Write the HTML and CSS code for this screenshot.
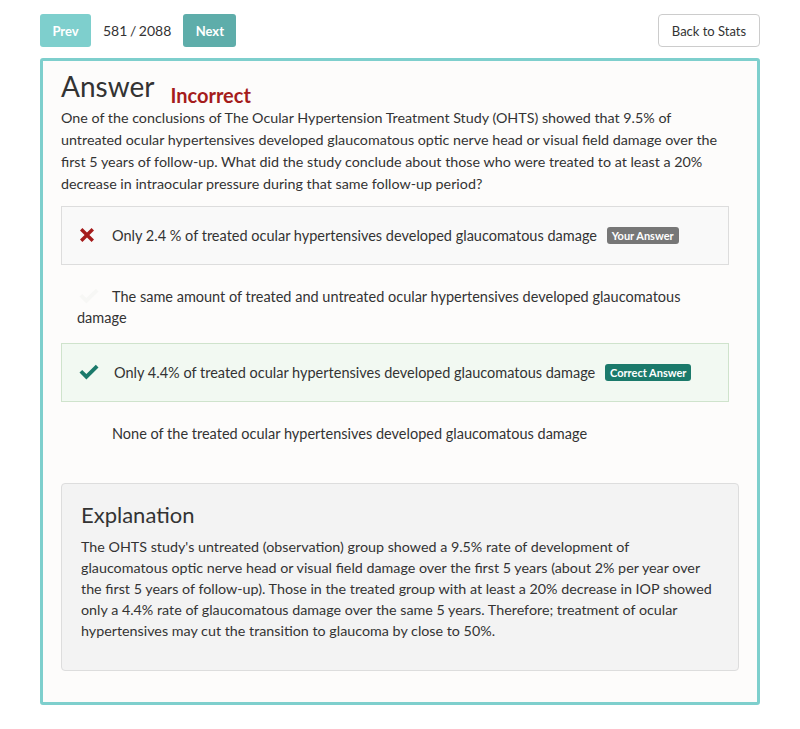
FILE: index.html
```html
<!DOCTYPE html>
<html>
<head>
<meta charset="utf-8">
<link rel="stylesheet" href="styles.css">
</head>
<body>
<div class="topbar">
  <div class="nav">
    <button class="btn btn-prev">Prev</button>
    <span class="counter">581 / 2088</span>
    <button class="btn btn-next">Next</button>
  </div>
  <button class="btn-back">Back to Stats</button>
</div>
<div class="panel">
  <div class="head">
    <h1 class="title">Answer</h1>
    <span class="status">Incorrect</span>
  </div>
  <p class="question">One of the conclusions of The Ocular Hypertension Treatment Study (OHTS) showed that 9.5% of untreated ocular hypertensives developed glaucomatous optic nerve head or visual field damage over the first 5 years of follow-up. What did the study conclude about those who were treated to at least a 20% decrease in intraocular pressure during that same follow-up period?</p>
  <div class="options">
    <div class="option wrong">
      <svg class="icon icon-x" viewBox="0 0 16 16" width="16" height="16"><path d="M1 3.4 3.4 1 8 5.6 12.6 1 15 3.4 10.4 8 15 12.6 12.6 15 8 10.4 3.4 15 1 12.6 5.6 8Z" fill="#a51c1c"/></svg>Only 2.4 % of treated ocular hypertensives developed glaucomatous damage <span class="badge badge-gray">Your Answer</span>
    </div>
    <div class="option plain">
      <svg class="icon icon-check icon-hidden" viewBox="0 0 20 16" width="20" height="16"><path d="M0.5 8.6 3.2 5.9 7.4 10.1 16.8 0.7 19.5 3.4 7.4 15.5Z" fill="#f7f7f5"/></svg>The same amount of treated and untreated ocular hypertensives developed glaucomatous damage
    </div>
    <div class="option right">
      <svg class="icon icon-check" viewBox="0 0 20 16" width="20" height="16"><path d="M0.5 8.6 3.2 5.9 7.4 10.1 16.8 0.7 19.5 3.4 7.4 15.5Z" fill="#1b7a6b"/></svg>Only 4.4% of treated ocular hypertensives developed glaucomatous damage <span class="badge badge-green">Correct Answer</span>
    </div>
    <div class="option plain">
      <span class="icon-space"></span>None of the treated ocular hypertensives developed glaucomatous damage
    </div>
  </div>
  <div class="explanation">
    <h2>Explanation</h2>
    <p>The OHTS study's untreated (observation) group showed a 9.5% rate of development of glaucomatous optic nerve head or visual field damage over the first 5 years (about 2% per year over the first 5 years of follow-up). Those in the treated group with at least a 20% decrease in IOP showed only a 4.4% rate of glaucomatous damage over the same 5 years. Therefore; treatment of ocular hypertensives may cut the transition to glaucoma by close to 50%.</p>
  </div>
</div>
</body>
</html>
```
FILE: styles.css
```css
* { box-sizing: border-box; }
body {
  margin: 0;
  padding: 14px 40px 0 40px;
  background: #fff;
  font-family: "Lato", "Open Sans", sans-serif;
  color: #333;
  font-size: 15px;
}
.topbar {
  display: flex;
  justify-content: space-between;
  align-items: flex-start;
  height: 44px;
}
.nav { display: flex; align-items: center; }
.btn {
  height: 33px;
  border: none;
  border-radius: 3px;
  color: #fff;
  font-family: inherit;
  font-weight: 700;
  font-size: 13px;
  padding: 0 12px;
}
.btn-prev { background: #7ecfcd; width: 51px; }
.btn-next { background: #5eadaa; width: 53px; }
.counter { font-size: 14px; color: #333; margin: 0 12px 0 12px; word-spacing: -1px; }
.btn-back {
  height: 33px;
  width: 102px;
  background: #fff;
  border: 1px solid #ccc;
  border-radius: 4px;
  font-family: inherit;
  font-size: 13px;
  color: #333;
}
.panel {
  border: 3px solid #7ecfcd;
  border-radius: 3px;
  background: #fdfcfb;
  padding: 9px 18px 32px 18px;
  height: 647px;
}
.head { display: flex; align-items: baseline; gap: 16px; }
.title { margin: 0; font-size: 28px; font-weight: 400; line-height: 32px; color: #333; }
.status { color: #a51c1c; font-weight: 700; font-size: 20px; position: relative; top: 6px; }
.question { margin: 5px 0 11px 0; line-height: 22px; font-size: 14.3px; width: 660px; }
.options { margin-right: 10px; }
.option {
  padding: 18px 15px 18px 15px;
  line-height: 21px;
  font-size: 14.5px;
  border: 1px solid transparent;
  margin-bottom: 19px;
}
.option.plain { padding-top: 1px; padding-bottom: 0; margin-bottom: 14px; }
.option.wrong { background: #f9f9f9; border-color: #ddd; }
.option.right { background: #f2f9f2; border-color: #cfe3cc; }
.icon { display: inline-block; vertical-align: -2px; }
.icon-x { margin: 0 17px 0 2px; }
.icon-check { margin: 0 15px 0 2px; }
.icon-check.icon-hidden { margin-right: 13px; }
.icon-space { display: inline-block; width: 35px; }
.badge {
  display: inline-block;
  font-size: 11px;
  font-weight: 700;
  color: #fff;
  border-radius: 3px;
  padding: 1px 5px;
  line-height: 15px;
  margin-left: 6px;
  vertical-align: 1px;
}
.badge-gray { background: #777; }
.badge-green { background: #1b7a6b; }
.explanation {
  margin-top: 38px;
  background: #f3f3f3;
  border: 1px solid #ddd;
  border-radius: 4px;
  padding: 17px 19px 30px 19px;
  height: 188px;
}
.explanation h2 { margin: 0 0 7px 0; font-size: 22px; font-weight: 400; line-height: 28px; }
.explanation p { margin: 0; line-height: 21px; font-size: 14.3px; }
```
